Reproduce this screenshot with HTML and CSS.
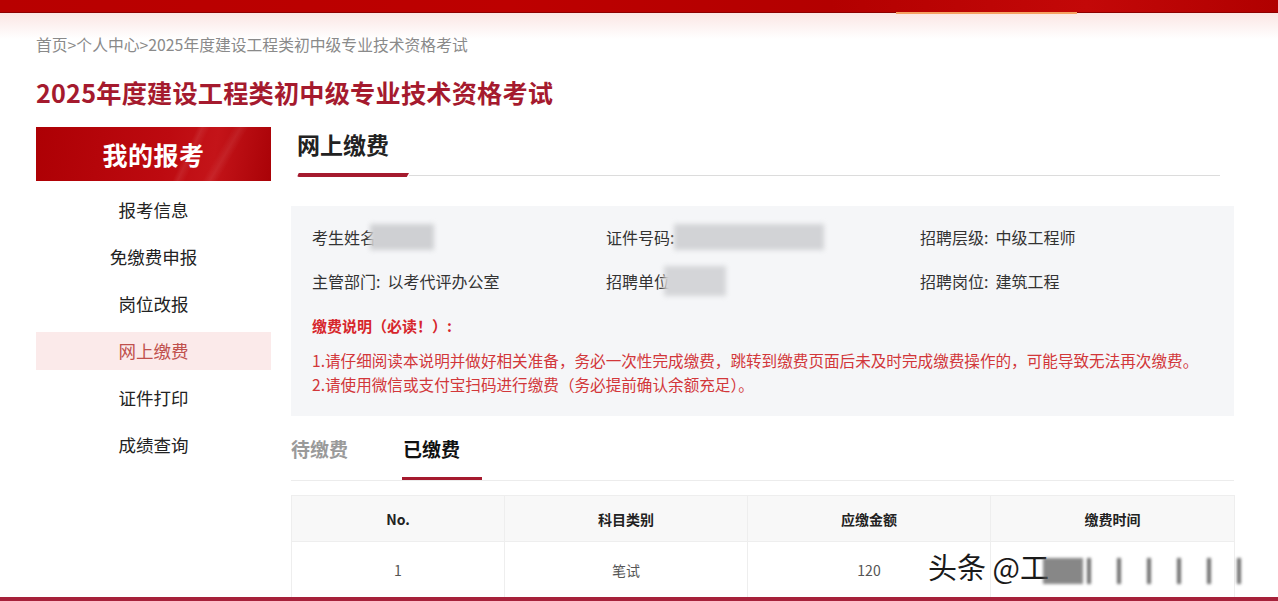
FILE: index.html
```html
<!DOCTYPE html>
<html lang="zh-CN">
<head>
<meta charset="utf-8">
<title>网上缴费</title>
<link rel="stylesheet" href="styles.css">
</head>
<body>
<div class="topbar"><span class="topbar-glow"></span></div>
<div class="page">
  <div class="crumb">首页&gt;个人中心&gt;2025年度建设工程类初中级专业技术资格考试</div>
  <h1 class="title">2025年度建设工程类初中级专业技术资格考试</h1>
  <div class="layout">
    <aside class="side">
      <div class="side-head">我的报考</div>
      <ul class="menu">
        <li class="menu-item">报考信息</li>
        <li class="menu-item">免缴费申报</li>
        <li class="menu-item">岗位改报</li>
        <li class="menu-item active">网上缴费</li>
        <li class="menu-item">证件打印</li>
        <li class="menu-item">成绩查询</li>
      </ul>
    </aside>
    <main class="main">
      <div class="sec-head">
        <h2 class="sec-title">网上缴费</h2>
        <div class="sec-line"><span class="sec-bar"></span></div>
      </div>
      <div class="info">
        <div class="info-grid">
          <div class="field">考生姓名<span class="blur b-name"></span></div>
          <div class="field">证件号码: <span class="blur b-id"></span></div>
          <div class="field">招聘层级:&nbsp; 中级工程师</div>
          <div class="field">主管部门:&nbsp; 以考代评办公室</div>
          <div class="field">招聘单位<span class="blur b-unit"></span></div>
          <div class="field">招聘岗位:&nbsp; 建筑工程</div>
        </div>
        <div class="notice-title">缴费说明（必读！）:</div>
        <p class="notice">1.请仔细阅读本说明并做好相关准备，务必一次性完成缴费，跳转到缴费页面后未及时完成缴费操作的，可能导致无法再次缴费。</p>
        <p class="notice">2.请使用微信或支付宝扫码进行缴费（务必提前确认余额充足）。</p>
      </div>
      <div class="tabs">
        <div class="tab">待缴费</div>
        <div class="tab on">已缴费</div>
      </div>
      <div class="table-wrap">
        <table class="tbl">
          <thead>
            <tr><th class="c1">No.</th><th class="c2">科目类别</th><th class="c3">应缴金额</th><th class="c4">缴费时间</th></tr>
          </thead>
          <tbody>
            <tr><td>1</td><td>笔试</td><td>120</td><td></td></tr>
          </tbody>
        </table>
        <div class="watermark">头条 @工<span class="wm-blur"></span></div>
      </div>
    </main>
  </div>
</div>
<div class="footbar"></div>
</body>
</html>
```

FILE: styles.css
```css
* { box-sizing: border-box; }
html, body { margin: 0; padding: 0; }
body {
  width: 1278px;
  height: 601px;
  overflow: hidden;
  background: #fff;
  font-family: "Noto Sans CJK SC", "Noto Sans", sans-serif;
  color: #333;
  position: relative;
}
.topbar {
  height: 13px;
  background: linear-gradient(90deg, #b80000 0%, #bd0000 40%, #b30000 65%, #c30808 85%, #b00000 100%);
  border-bottom: 1px solid #8e0000;
  position: relative;
}
.topbar-glow {
  position: absolute;
  left: 896px;
  width: 181px;
  bottom: -2px;
  height: 2px;
  background: #f6a263;
}
.page {
  padding: 0 44px 0 36px;
  background: linear-gradient(180deg, #fbe6e4 0px, #fff 26px);
}
.crumb {
  padding-top: 20px;
  font-size: 15.8px;
  line-height: 24px;
  color: #8a8a8a;
  height: 44px;
}
.title {
  margin: 18px 0 0;
  font-size: 25.2px;
  line-height: 34px;
  height: 34px;
  font-weight: 700;
  color: #a51a2e;
  letter-spacing: 0.2px;
}
.layout {
  margin-top: 18px;
  display: flex;
  gap: 20px;
}
.side { width: 235px; flex: none; }
.side-head {
  height: 54px;
  line-height: 54px;
  text-align: center;
  color: #fff;
  font-size: 25px;
  font-weight: 700;
  letter-spacing: 0.5px;
  background:
    linear-gradient(115deg, transparent 62%, rgba(255,255,255,0.08) 64%, transparent 67%),
    linear-gradient(120deg, transparent 74%, rgba(255,255,255,0.07) 77%, transparent 80%),
    linear-gradient(100deg, #ad0004 0%, #bd0a10 55%, #c41419 75%, #a90207 100%);
}
.menu {
  list-style: none;
  margin: 0;
  padding: 10px 0 0;
  display: flex;
  flex-direction: column;
  gap: 9px;
}
.menu-item {
  height: 38px;
  line-height: 38px;
  text-align: center;
  font-size: 17.5px;
  color: #222;
}
.menu-item.active {
  background: #fbeaea;
  color: #c0504d;
}
.main { flex: 1; min-width: 0; }
.sec-head { padding: 0 14px 0 6px; }
.sec-title {
  margin: 0;
  padding-top: 1px;
  font-size: 23px;
  line-height: 32px;
  font-weight: 700;
  color: #222;
}
.sec-line {
  margin-top: 13px;
  height: 4px;
  position: relative;
  display: flex;
  align-items: flex-end;
}
.sec-line::after {
  content: "";
  flex: 1;
  height: 1px;
  background: #dcdcdc;
  margin-bottom: 1px;
}
.sec-bar {
  width: 112px;
  height: 4px;
  background: #a51a2e;
  clip-path: polygon(1.5% 0, 100% 0, 98% 100%, 0 100%);
  border-radius: 2px 0 0 2px;
}
.info {
  margin-top: 29px;
  background: #f5f6f8;
  padding: 19px 21px 20px;
}
.info-grid {
  display: grid;
  grid-template-columns: 294px 314px 1fr;
  row-gap: 20px;
  font-size: 16px;
  line-height: 24px;
  color: #333;
}
.field { white-space: nowrap; height: 24px; }
.blur {
  display: inline-block;
  vertical-align: top;
  height: 26px;
  margin-top: -1px;
  background: #d2d3d6;
  filter: blur(2.5px);
}
.b-name { width: 64px; margin-left: -6px; background: #cfd0d3; }
.b-id { width: 150px; margin-left: -4px; }
.b-unit { width: 62px; margin-left: -6px; height: 30px; margin-top: -3px; background: #d4d5d8; }
.notice-title {
  margin-top: 21px;
  font-size: 15px;
  line-height: 24px;
  height: 24px;
  font-weight: 700;
  color: #d7262c;
}
.notice {
  margin: 0;
  font-size: 15.6px;
  line-height: 24px;
  height: 24px;
  color: #d2373a;
  white-space: nowrap;
}
.notice-title + .notice { margin-top: 10px; }
.tabs {
  display: flex;
  gap: 31px;
  padding-top: 19px;
  border-bottom: 1px solid #ececec;
}
.tab {
  width: 80px;
  height: 45px;
  font-size: 19px;
  line-height: 28px;
  font-weight: 700;
  color: #9a9a9a;
  border-bottom: 3px solid transparent;
}
.tab.on {
  color: #111;
  border-bottom-color: #a51a2e;
  padding-left: 1px;
}
.table-wrap {
  margin-top: 14px;
  position: relative;
}
.tbl {
  width: 100%;
  border-collapse: collapse;
  table-layout: fixed;
  font-size: 14px;
}
.tbl th, .tbl td {
  border: 1px solid #eeeeee;
  text-align: center;
}
.tbl th {
  height: 46px;
  background: #f8f8f8;
  font-weight: 700;
  color: #222;
}
.tbl td {
  height: 56px;
  color: #555;
  background: #fff;
}
.c1 { width: 213px; }
.c2 { width: 243px; }
.c3 { width: 243px; }
.c4 { width: 244px; }
.watermark {
  position: absolute;
  left: 637px;
  top: 51px;
  font-size: 29px;
  line-height: 40px;
  color: #1a1a1a;
  white-space: nowrap;
  text-shadow: 0 0 2px #fff, 0 0 2px #fff;
}
.wm-blur {
  display: inline-block;
  vertical-align: middle;
  width: 210px;
  height: 26px;
  margin-left: -6px;
  background:
    linear-gradient(90deg, #555 0 40px, transparent 40px),
    repeating-linear-gradient(90deg, transparent 0 14px, #333 14px 18px, transparent 18px 30px);
  filter: blur(1.5px);
  opacity: 0.7;
}
.footbar {
  position: absolute;
  left: 0;
  right: 0;
  bottom: 0;
  height: 4px;
  background: #a6213a;
}
```
